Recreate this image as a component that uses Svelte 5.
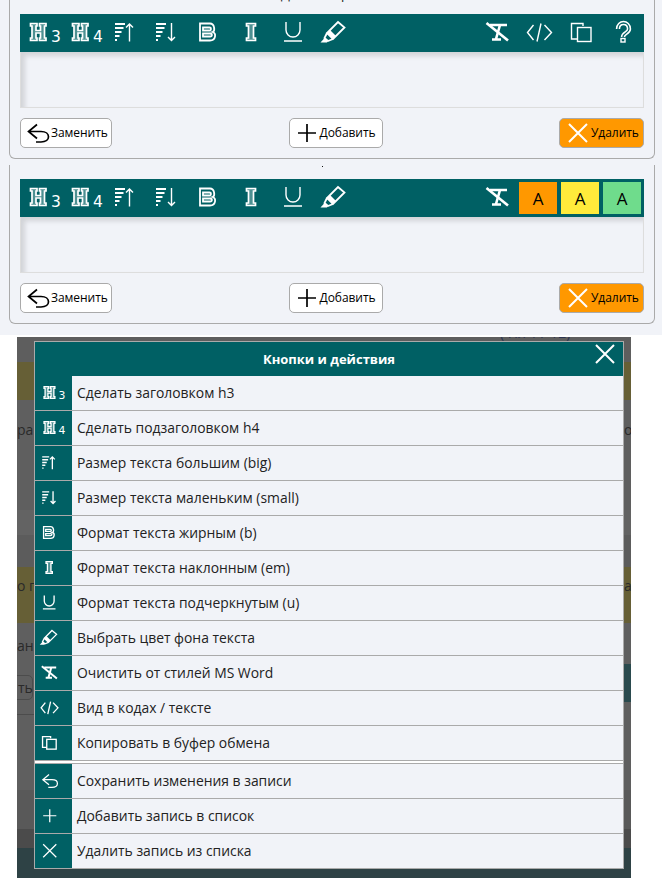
<script>
  const left = [
    { n: 'h3', w: 42 }, { n: 'h4', w: 42 }, { n: 'big', w: 35 }, { n: 'small', w: 47 },
    { n: 'b', w: 37 }, { n: 'i', w: 49 }, { n: 'u', w: 35 }, { n: 'marker', w: 46 }
  ];
  const help = [
    ['h3', 'Сделать заголовком h3'],
    ['h4', 'Сделать подзаголовком h4'],
    ['big', 'Размер текста большим (big)'],
    ['small', 'Размер текста маленьким (small)'],
    ['b', 'Формат текста жирным (b)'],
    ['i', 'Формат текста наклонным (em)'],
    ['u', 'Формат текста подчеркнутым (u)'],
    ['marker', 'Выбрать цвет фона текста'],
    ['clear', 'Очистить от стилей MS Word'],
    ['code', 'Вид в кодах / тексте'],
    ['copy', 'Копировать в буфер обмена']
  ];
  const actions = [
    ['back', 'Сохранить изменения в записи'],
    ['plus', 'Добавить запись в список'],
    ['x', 'Удалить запись из списка']
  ];
  const panels = [
    { top: 'tools' },
    { top: 'swatches' }
  ];
</script>

{#snippet glyph(n)}
  {#if n === 'h3' || n === 'h4'}
    <path class="line letter" d="M1.5 6.5H8V9H7V13.5H11.5V9H10.5V6.5H17V9H15.5V21H17V23.5H10.5V21H11.5V16H7V21H8V23.5H1.5V21H3V9H1.5Z" />
    <text class="digit" x="22" y="24.5">{n === 'h3' ? '3' : '4'}</text>
  {:else if n === 'big' || n === 'small'}
    <path class="bars" d="M6 7H16M6 11H14.5M6 15H12.5M6 19H10.5M6 23H8" />
    {#if n === 'big'}
      <path class="line" d="M20.5 24.5V7M17 10.5L20.5 7L24 10.5" />
    {:else}
      <path class="line" d="M21.5 6V23.5M18 20L21.5 23.5L25 20" />
    {/if}
  {:else if n === 'b'}
    <path class="line heavy" d="M8 6.5H18C22.5 6.5 23.5 14 20.5 15C24.5 16 24 23.5 18 23.5H8Z" />
    <path class="line heavy" d="M11 10.5H17.5C19.5 10.5 19.5 13.5 17.5 13.5H11ZM11 16.5H18C20.5 16.5 20.5 19.5 18 19.5H11Z" />
  {:else if n === 'i'}
    <path class="line heavy letter" d="M11.5 6.5H20.5V9H18.5V21H20.5V23.5H11.5V21H13.5V9H11.5Z" />
  {:else if n === 'u'}
    <path class="line" d="M9 5V13A7 7 0 0 0 23 13V5M7 24H25" />
  {:else if n === 'marker'}
    <path class="line heavy" d="M20 5L26.5 10.5L15 22L9 16ZM9 16L6.5 21L10 24L15 22" />
    <path class="solid" d="M6.5 21L2.5 25.5H9L10 24Z" />
    <path class="solid" d="M9 16L15 22L18 19L12 13Z" />
  {:else if n === 'clear'}
    <path class="line thick" d="M9 8H26M19 8L15 22M11 22.5H20" />
    <path class="line thick" d="M5.5 6L27 23.5" />
  {:else if n === 'code'}
    <path class="line" d="M10.5 8L4.5 15.5L10.5 23M18 6.5L14 24.5M21.5 8L28.5 15.5L21.5 23" />
  {:else if n === 'copy'}
    <path class="line" d="M18 9V6.5H6.5V22H12.5" />
    <rect class="line" x="12.5" y="10.5" width="13.5" height="14" />
  {:else if n === 'help'}
    <path class="fat" d="M11 12C11 4 22 4 22 12C22 16 16 16 16 20" />
    <path class="inner" d="M11 12C11 4 22 4 22 12C22 16 16 16 16 20" />
    <rect class="line" x="14" y="21.5" width="4" height="3.5" />
  {/if}
{/snippet}

{#snippet act(n)}
  {#if n === 'back'}
    <path d="M11 3.5L2.5 10.5L11 17.5M2.5 10.5H15C25 10.5 25 21 15 21H10" />
  {:else if n === 'plus'}
    <path d="M3 12H21M12 3V21" />
  {:else}
    <path d="M3 3L21 21M21 3L3 21" />
  {/if}
{/snippet}

<div class="top">
  <span class="legend first">Для выбора</span>
  {#each panels as p, i}
    <section class="panel">
      {#if i === 1}<span class="dot"></span>{/if}
      <div class="toolbar">
        <div class="group">
          {#each left as t}
            <button class="tool" style="width:{t.w}px"><svg viewBox="0 0 32 32" width="32" height="32">{@render glyph(t.n)}</svg></button>
          {/each}
        </div>
        <div class="group end">
          <button class="tool fixed"><svg viewBox="0 0 32 32" width="32" height="32">{@render glyph('clear')}</svg></button>
          {#if p.top === 'tools'}
            {#each ['code', 'copy', 'help'] as n}
              <button class="tool fixed"><svg viewBox="0 0 32 32" width="32" height="32">{@render glyph(n)}</svg></button>
            {/each}
          {:else}
            <div class="swatches">
              <button class="swatch orange">A</button>
              <button class="swatch yellow">A</button>
              <button class="swatch green">A</button>
            </div>
          {/if}
        </div>
      </div>
      <div class="editor"></div>
      <div class="actions">
        <button class="btn replace"><svg class="stroke" viewBox="0 0 24 24" width="24" height="24">{@render act('back')}</svg><span>Заменить</span></button>
        <button class="btn add"><svg class="stroke" viewBox="0 0 24 24" width="24" height="24">{@render act('plus')}</svg><span>Добавить</span></button>
        <button class="btn del"><svg class="stroke light" viewBox="0 0 24 24" width="24" height="24">{@render act('x')}</svg><span>Удалить</span></button>
      </div>
    </section>
  {/each}
</div>

<div class="backdrop">
  <span class="ghost g1">( Пл 11-12)</span>
  <span class="ghost g2">ра</span>
  <span class="ghost g3">оч</span>
  <span class="ghost g4">о п</span>
  <span class="ghost g5">ан</span>
  <span class="ghost g6">ан</span>
  <span class="ghost g7">ть</span>
  <span class="band"></span>
  <span class="rule"></span>
  <div class="modal">
    <header class="head">
      <span>Кнопки и действия</span>
      <svg class="close stroke light" viewBox="0 0 24 24" width="24" height="24">{@render act('x')}</svg>
    </header>
    <ul class="list">
      {#each help as [n, label]}
        <li class="row">
          <span class="cell" class:wide={n === 'h3' || n === 'h4'}><svg viewBox="0 0 32 32" width="22.4" height="22.4">{@render glyph(n)}</svg></span>
          <span class="label">{label}</span>
        </li>
      {/each}
    </ul>
    <ul class="list second">
      {#each actions as [n, label]}
        <li class="row">
          <span class="cell act"><svg class="stroke light thin" viewBox="0 0 24 24" width="17.5" height="17.5">{@render act(n)}</svg></span>
          <span class="label">{label}</span>
        </li>
      {/each}
    </ul>
  </div>
</div>

<style>
  :global(body) {
    margin: 0;
    background: #fff;
    font-family: "Open Sans", "Noto Sans", sans-serif;
  }
  .top {
    position: relative;
    height: 335px;
    overflow: hidden;
    padding: 0 7px 0 9px;
    box-sizing: border-box;
    background: #f1f3f8;
  }
  .legend {
    position: absolute;
    left: 281px;
    top: -15px;
    font-size: 13px;
    line-height: 18px;
    color: #222;
  }
  .panel {
    position: relative;
    box-sizing: border-box;
    height: 159px;
    margin-bottom: 6px;
    padding: 14px 10px 0;
    border: 1px solid #aaa;
    border-top: 0;
    border-radius: 0 0 6px 6px;
  }
  .dot {
    position: absolute;
    left: 312px;
    top: 1px;
    width: 1px;
    height: 1px;
    background: #111;
  }
  .toolbar {
    display: flex;
    justify-content: space-between;
    height: 38px;
    background: #006064;
  }
  .group {
    display: flex;
    align-items: center;
    padding-left: 3.5px;
  }
  .group.end {
    padding-left: 0;
  }
  button {
    font: inherit;
    padding: 0;
    border: 0;
    background: none;
  }
  .tool {
    display: flex;
    align-items: center;
    justify-content: center;
    height: 38px;
  }
  .tool.fixed {
    width: 42px;
  }
  .tool svg, .cell svg {
    display: block;
    overflow: visible;
  }
  .line {
    fill: none;
    stroke: #fff;
    stroke-width: 1.4;
  }
  .line.heavy {
    stroke-width: 1.8;
  }
  .line.thick {
    stroke-width: 2.6;
  }
  .line.letter {
    fill: rgba(255, 255, 255, 0.3);
    stroke-width: 1.7;
  }
  .cell .line {
    stroke-width: 1.9;
  }
  .cell .line.thick {
    stroke-width: 2.8;
  }
  .bars {
    fill: none;
    stroke: #fff;
    stroke-width: 2;
  }
  .solid {
    fill: #fff;
  }
  .fat {
    fill: none;
    stroke: #fff;
    stroke-width: 4.4;
  }
  .inner {
    fill: none;
    stroke: #006064;
    stroke-width: 1.3;
  }
  .digit {
    fill: #fff;
    font-family: "DejaVu Sans", sans-serif;
    font-weight: 400;
    font-size: 15.5px;
  }
  .swatches {
    display: flex;
    gap: 4px;
    margin: 0 3px 0 1px;
  }
  .swatch {
    width: 38px;
    height: 32px;
    font-size: 17px;
    color: #000;
  }
  .orange { background: #ff9800; }
  .yellow { background: #ffeb3b; }
  .green { background: #6fdc8c; }
  .editor {
    box-sizing: border-box;
    height: 56px;
    border: 1px solid #ddd;
    border-top: 0;
    box-shadow: inset 4px 4px 5px rgba(0, 0, 0, 0.13);
  }
  .actions {
    display: flex;
    justify-content: space-between;
    margin-top: 10px;
  }
  .btn {
    display: flex;
    align-items: center;
    box-sizing: border-box;
    height: 30px;
    border: 1px solid #aaa;
    border-radius: 5px;
    background: #fff;
    font-size: 12px;
    color: #000;
  }
  .btn span {
    margin-bottom: 2px;
    letter-spacing: -0.05px;
  }
  .replace { width: 92px; padding-left: 5px; gap: 1px; }
  .add { width: 94px; padding-left: 5px; gap: 1px; }
  .del { width: 85px; padding-left: 6px; gap: 1px; background: #ff9800; }
  .stroke {
    flex: none;
    fill: none;
    stroke: #000;
    stroke-width: 1.7;
  }
  .stroke.light {
    stroke: #fff;
    stroke-width: 2;
  }
  .stroke.thin {
    stroke-width: 1.7;
  }
  .backdrop {
    position: relative;
    box-sizing: border-box;
    width: 614px;
    height: 541px;
    margin: 2px 0 0 17px;
    padding: 4px 7px 0 17px;
    overflow: hidden;
    background: linear-gradient(
      #5e5e5e 0 25px, #665f36 25px 63px, #5f5f5f 63px 173px, #636363 173px 198px,
      #5c5c5c 198px 230px, #665f36 230px 286px, #5f5f5f 286px 453px, #595959 453px 492px,
      #4b4b4b 492px 511px, #2e4245 511px 541px
    );
  }
  .ghost {
    position: absolute;
    font-size: 14px;
    line-height: 18px;
    color: #2a2a2a;
  }
  .g1 { left: 483px; top: -13px; color: #2b3350; }
  .g2 { left: 0; top: 84px; }
  .g3 { left: 607px; top: 84px; }
  .g4 { left: 0; top: 240px; }
  .g5 { left: 607px; top: 240px; }
  .g6 { left: 0; top: 300px; }
  .g7 {
    left: -20px;
    top: 338px;
    box-sizing: border-box;
    width: 36px;
    height: 25px;
    padding: 3px 0 0 20px;
    border: 1px solid #4c4c4c;
    border-radius: 5px;
  }
  .rule {
    position: absolute;
    left: 0;
    top: 377px;
    width: 17px;
    height: 1px;
    background: #4c4c4c;
  }
  .band {
    position: absolute;
    left: 607px;
    top: 327px;
    width: 7px;
    height: 38px;
    background: #2a4a4e;
  }
  .modal {
    position: relative;
    box-sizing: border-box;
    width: 590px;
    height: 528px;
    border: 1px solid #aaa;
    border-bottom: 0;
    background: #f1f3f8;
  }
  .head {
    position: relative;
    display: flex;
    align-items: center;
    justify-content: center;
    height: 34px;
    background: #006064;
    color: #fff;
    font-size: 13px;
    font-weight: 700;
  }
  .close {
    position: absolute;
    right: 6px;
    top: 0;
  }
  .list {
    margin: 0;
    padding: 0;
    list-style: none;
  }
  .list.second {
    margin-top: 2px;
    border-top: 1px solid #aaa;
    background: #f1f3f8;
  }
  .list:not(.second) {
    box-shadow: 0 2px 0 #fff;
  }
  .row {
    display: flex;
    box-sizing: border-box;
    height: 35px;
    border-bottom: 1px solid #aaa;
  }
  .cell {
    display: flex;
    flex: none;
    align-items: center;
    box-sizing: border-box;
    width: 37px;
    padding-left: 3.3px;
    background: #006064;
  }
  .cell.wide {
    padding-left: 8.2px;
  }
  .cell.act {
    padding-left: 5.75px;
  }
  .label {
    display: flex;
    align-items: center;
    padding: 0 0 2px 5px;
    font-size: 13.9px;
    color: #222;
  }
</style>
